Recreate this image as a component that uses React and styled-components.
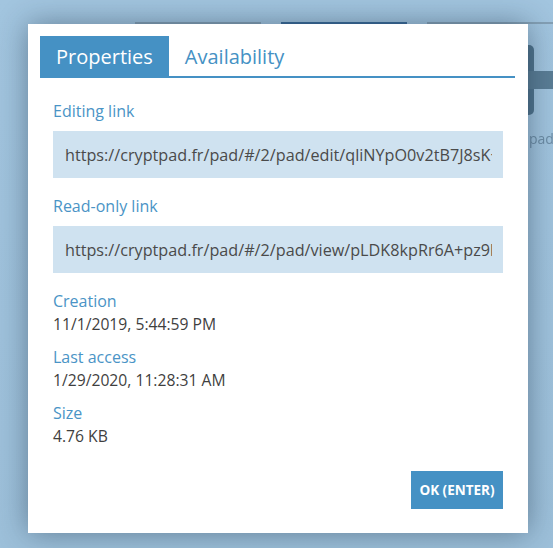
import React, { useState } from 'react';
import styled, { createGlobalStyle } from 'styled-components';

const GlobalStyle = createGlobalStyle`
  html, body {
    margin: 0;
    padding: 0;
    width: 553px;
    height: 548px;
    overflow: hidden;
    background: #a0c4de;
    font-family: "Open Sans", "Liberation Sans", sans-serif;
  }
`;

const Page = styled.div`
  position: relative;
  width: 553px;
  height: 548px;
  overflow: hidden;
  background: linear-gradient(to bottom, #a2c5df 0%, #9dc0da 100%);
`;

/* blurred drive behind the dialog */
const Drive = styled.div`
  display: flex;
  flex-direction: column;
  height: 100%;
  filter: blur(0.6px);
`;

const TopStrip = styled.div`
  display: flex;
  gap: 20px;
  padding: 22px 0 0 135px;
  height: 2px;
`;

const StripLine = styled.div`
  width: 140px;
  height: 2px;
  background: ${p => (p.active ? '#3a6a98' : '#84a0b5')};
`;

const DriveBody = styled.div`
  flex: 1;
  display: flex;
  justify-content: flex-end;
  padding: 21px 0 0;
`;

const NewTile = styled.div`
  display: flex;
  flex-direction: column;
  align-items: flex-start;
  gap: 14px;
  width: 26px;
`;

const PlusIcon = styled.svg`
  display: block;
`;

const TileLabel = styled.span`
  font-size: 14px;
  color: #6c8ca4;
  padding-left: 2px;
`;

const Overlay = styled.div`
  position: absolute;
  inset: 0;
  display: flex;
  align-items: flex-start;
  padding: 24px 0 0 28px;
`;

const Modal = styled.div`
  width: 500px;
  height: 509px;
  box-sizing: border-box;
  background: #ffffff;
  padding: 12px 13px 24px 12px;
  display: flex;
  flex-direction: column;
  box-shadow: 0 0 28px rgba(20, 40, 60, 0.45);
`;

const Tabs = styled.div`
  display: flex;
  border-bottom: 2px solid #4591c4;
`;

const Tab = styled.button`
  border: none;
  margin: 0;
  height: 40px;
  padding: 0 16px;
  font-family: inherit;
  font-size: 20px;
  cursor: pointer;
  background: ${p => (p.active ? '#4591c4' : 'transparent')};
  color: ${p => (p.active ? '#ffffff' : '#4591c4')};
`;

const Content = styled.div`
  flex: 1;
  display: flex;
  flex-direction: column;
  padding: 22px 12px 0 13px;
`;

const Label = styled.div`
  font-size: 16px;
  line-height: 23px;
  color: #4a94c6;
`;

const LinkBox = styled.div`
  margin: 8px 0 17px;
  height: 47px;
  box-sizing: border-box;
  background: #cfe2f0;
  padding: 0 11px 0 12px;
  display: flex;
  align-items: center;
`;

const LinkText = styled.span`
  flex: 1;
  min-width: 0;
  font-size: 16.2px;
  color: #4a4a4a;
  white-space: nowrap;
  overflow: hidden;
`;

const Field = styled.div`
  display: flex;
  flex-direction: column;
  margin-bottom: 10px;
`;

const Value = styled.div`
  font-size: 15.7px;
  line-height: 23px;
  color: #3f3f3f;
`;

const Footer = styled.div`
  margin-top: auto;
  display: flex;
  justify-content: flex-end;
`;

const OkButton = styled.button`
  border: none;
  width: 92px;
  height: 38px;
  background: #4591c4;
  color: #ffffff;
  font-family: inherit;
  font-weight: 700;
  font-size: 13.5px;
  cursor: pointer;
`;

const fields = [
  { label: 'Creation', value: '11/1/2019, 5:44:59 PM' },
  { label: 'Last access', value: '1/29/2020, 11:28:31 AM' },
  { label: 'Size', value: '4.76 KB' },
];

export default function App() {
  const [tab, setTab] = useState('props');

  return (
    <Page>
      <GlobalStyle />
      <Drive>
        <TopStrip>
          <StripLine />
          <StripLine active />
          <StripLine />
        </TopStrip>
        <DriveBody>
          <NewTile>
            <PlusIcon width="26" height="70" viewBox="0 0 26 70">
              <rect x="-10" y="0" width="17" height="70" rx="5" fill="#50748d" />
              <rect x="0" y="26" width="26" height="18" fill="#5a7d95" />
            </PlusIcon>
            <TileLabel>pad</TileLabel>
          </NewTile>
        </DriveBody>
      </Drive>

      <Overlay>
        <Modal>
          <Tabs>
            <Tab active={tab === 'props'} onClick={() => setTab('props')}>Properties</Tab>
            <Tab active={tab === 'avail'} onClick={() => setTab('avail')}>Availability</Tab>
          </Tabs>
          <Content>
            <Label>Editing link</Label>
            <LinkBox>
              <LinkText>https://cryptpad.fr/pad/#/2/pad/edit/qliNYpO0v2tB7J8sK+Yx3cQ</LinkText>
            </LinkBox>
            <Label>Read-only link</Label>
            <LinkBox>
              <LinkText>https://cryptpad.fr/pad/#/2/pad/view/pLDK8kpRr6A+pz9bKe3</LinkText>
            </LinkBox>
            {fields.map(f => (
              <Field key={f.label}>
                <Label>{f.label}</Label>
                <Value>{f.value}</Value>
              </Field>
            ))}
            <Footer>
              <OkButton>OK (ENTER)</OkButton>
            </Footer>
          </Content>
        </Modal>
      </Overlay>
    </Page>
  );
}
